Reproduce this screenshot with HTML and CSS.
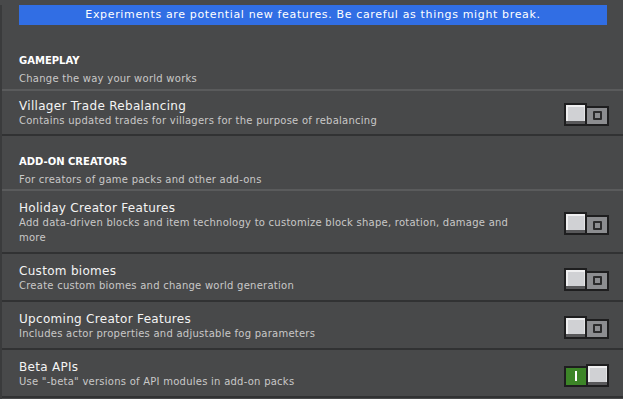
FILE: index.html
```html
<!DOCTYPE html>
<html lang="en">
<head>
  <meta charset="UTF-8" />
  <title>Experiments</title>
  <link rel="stylesheet" href="styles.css">
</head>
<body>
  <div class="screen">
    <div class="banner">Experiments are potential new features. Be careful as things might break.</div>

    <!-- Gameplay -->
    <div class="group-head">
      <h2>GAMEPLAY</h2>
      <p>Change the way your world works</p>
    </div>
    <div class="row first">
      <div class="row-text">
        <h3>Villager Trade Rebalancing</h3>
        <p>Contains updated trades for villagers for the purpose of rebalancing</p>
      </div>
      <div class="toggle"><span class="knob"></span><span class="track"><i class="off-mark"></i></span></div>
    </div>

    <!-- Add-on creators -->
    <div class="group-head">
      <h2>ADD-ON CREATORS</h2>
      <p>For creators of game packs and other add-ons</p>
    </div>
    <div class="row">
      <div class="row-text">
        <h3>Holiday Creator Features</h3>
        <p>Add data-driven blocks and item technology to customize block shape, rotation, damage and more</p>
      </div>
      <div class="toggle"><span class="knob"></span><span class="track"><i class="off-mark"></i></span></div>
    </div>
    <div class="row">
      <div class="row-text">
        <h3>Custom biomes</h3>
        <p>Create custom biomes and change world generation</p>
      </div>
      <div class="toggle"><span class="knob"></span><span class="track"><i class="off-mark"></i></span></div>
    </div>
    <div class="row">
      <div class="row-text">
        <h3>Upcoming Creator Features</h3>
        <p>Includes actor properties and adjustable fog parameters</p>
      </div>
      <div class="toggle"><span class="knob"></span><span class="track"><i class="off-mark"></i></span></div>
    </div>
    <div class="row">
      <div class="row-text">
        <h3>Beta APIs</h3>
        <p>Use "-beta" versions of API modules in add-on packs</p>
      </div>
      <div class="toggle on"><span class="track"><i class="on-mark"></i></span><span class="knob"></span></div>
    </div>
  </div>
</body>
</html>
```

FILE: styles.css
```css
body {
  margin: 0;
  background: #48494a;
  font-family: "DejaVu Sans", sans-serif;
  color: #f0f0f0;
}
.screen {
  min-height: 100vh;
  border-left: 2px solid #3a3b3c;
}
.banner {
  margin: 5px 16px 0 17px;
  height: 20px;
  line-height: 20px;
  background: #316ee4;
  color: #fff;
  text-align: center;
  font-size: 11px;
  letter-spacing: 0.65px;
}

/* section headers */
.group-head {
  padding: 20px 17px 2px;
  border-bottom: 2px solid #5a5b5c;
}
.banner + .group-head {
  margin-top: 10px;
  padding-bottom: 3px;
}
.group-head h2 {
  margin: 0;
  font-size: 10px;
  line-height: 12px;
  font-weight: bold;
  color: #fff;
}
.group-head p,
.row-text p {
  margin: 4px 0 0;
  font-size: 10px;
  line-height: 15px;
  letter-spacing: 0.25px;
  color: #c8c8c8;
}

/* experiment rows */
.row {
  display: flex;
  align-items: center;
  padding: 11px 14px 7px 17px;
  border-bottom: 2px solid #313233;
}
.row.first {
  padding-top: 9px;
  padding-bottom: 6px;
}
.row-text {
  flex: 1;
  max-width: 505px;
  margin-right: auto;
}
.row-text h3 {
  margin: 0;
  font-size: 12px;
  line-height: 13px;
  font-weight: normal;
  letter-spacing: 0.3px;
  color: #f4f4f4;
}
.row-text p {
  margin: 0;
}

/* toggle switch */
.toggle {
  display: flex;
  align-items: flex-end;
  flex: none;
  margin-left: 20px;
}
.knob {
  position: relative;
  z-index: 1;
  width: 23px;
  height: 23px;
  box-sizing: border-box;
  border: 2px solid #1e1e1f;
  background: #58585a;
}
.knob::before {
  content: "";
  display: block;
  height: 16px;
  background: #d0d1d4;
  box-shadow: inset 2px 2px 0 #efeff0, inset -1px 0 0 #e4e4e6;
}
.track {
  width: 24px;
  height: 20px;
  box-sizing: border-box;
  border: 2px solid #1e1e1f;
  margin-left: -2px;
  background: #8c8d90;
  display: flex;
  align-items: center;
  justify-content: center;
}
.off-mark {
  width: 9px;
  height: 9px;
  box-sizing: border-box;
  border: 2px solid #2b2b2c;
  border-radius: 1px;
}
.toggle.on .track {
  margin-left: 0;
  margin-right: -2px;
  height: 21px;
  background: #3c8527;
}
.on-mark {
  width: 2px;
  height: 10px;
  background: #fff;
}
```
